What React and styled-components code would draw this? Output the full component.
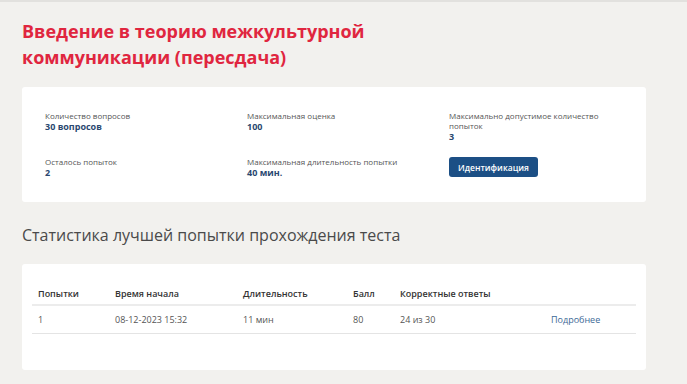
import React from 'react';
import styled, { createGlobalStyle } from 'styled-components';

const Global = createGlobalStyle`
  body {
    margin: 0;
    background: #f2f1ee;
    font-family: "Open Sans", "Liberation Sans", sans-serif;
  }
`

const Page = styled.div`
  border-top: 2px solid #e2e1de;
  padding: 16px 41px 14px 22px;
  width: 687px;
  box-sizing: border-box;
`
const Title = styled.h1`
  margin: 0 0 17px;
  font-size: 18px;
  line-height: 26px;
  font-weight: 700;
  color: #e0263f;
  width: 380px;
`
const Card = styled.div`
  background: #fff;
  border-radius: 3px;
  padding: ${p => p.$pad};
`
const InfoGrid = styled.div`
  display: grid;
  grid-template-columns: 202px 202px 170px;
  row-gap: 15px;
`
const Field = styled.div`
  display: flex;
  flex-direction: column;
`
const Label = styled.span`
  font-size: 8px;
  line-height: 10px;
  color: #555;
`
const Value = styled.span`
  font-size: 9px;
  line-height: 11px;
  font-weight: 700;
  color: #2a4870;
`
const Button = styled.button`
  align-self: flex-start;
  background: #1c4f85;
  color: #fff;
  border: none;
  border-radius: 3px;
  font-family: inherit;
  font-size: 8.5px;
  font-weight: 600;
  padding: 0;
  height: 20px;
  width: 89px;
`
const SectionTitle = styled.h2`
  margin: 21px 0 17px;
  font-size: 16px;
  line-height: 24px;
  font-weight: 400;
  color: #4a4a4a;
`
const Table = styled.table`
  width: 100%;
  table-layout: fixed;
  border-collapse: collapse;
  font-size: 9px;
`
const Th = styled.th`
  text-align: left;
  font-weight: 600;
  color: #333;
  padding: 0 6px;
  height: 22px;
  border-bottom: 2px solid #ececec;
  width: ${p => p.$w || 'auto'};
`
const Td = styled.td`
  color: #555;
  padding: 0 6px;
  height: 27px;
  border-bottom: 1px solid #e4e4e4;
`
const Link = styled.a`
  color: #3c6996;
  text-decoration: none;
`

const fields = [
  { label: 'Количество вопросов', value: '30 вопросов' },
  { label: 'Максимальная оценка', value: '100' },
  { label: 'Максимально допустимое количество попыток', value: '3' },
  { label: 'Осталось попыток', value: '2' },
  { label: 'Максимальная длительность попытки', value: '40 мин.' },
]

export default function App() {
  return (
    <Page>
      <Global />
      <Title>Введение в теорию межкультурной коммуникации (пересдача)</Title>
      <Card $pad="24px 23px 24px 23px">
        <InfoGrid>
          {fields.map(f => (
            <Field key={f.label}>
              <Label>{f.label}</Label>
              <Value>{f.value}</Value>
            </Field>
          ))}
          <Field>
            <Button>Идентификация</Button>
          </Field>
        </InfoGrid>
      </Card>
      <SectionTitle>Статистика лучшей попытки прохождения теста</SectionTitle>
      <Card $pad="18px 10px 36px 10px">
        <Table>
          <thead>
            <tr>
              <Th $w="65px">Попытки</Th>
              <Th $w="116px">Время начала</Th>
              <Th $w="98px">Длительность</Th>
              <Th $w="35px">Балл</Th>
              <Th $w="139px">Корректные ответы</Th>
              <Th></Th>
            </tr>
          </thead>
          <tbody>
            <tr>
              <Td>1</Td>
              <Td>08-12-2023 15:32</Td>
              <Td>11 мин</Td>
              <Td>80</Td>
              <Td>24 из 30</Td>
              <Td><Link href="#">Подробнее</Link></Td>
            </tr>
          </tbody>
        </Table>
      </Card>
    </Page>
  )
}
